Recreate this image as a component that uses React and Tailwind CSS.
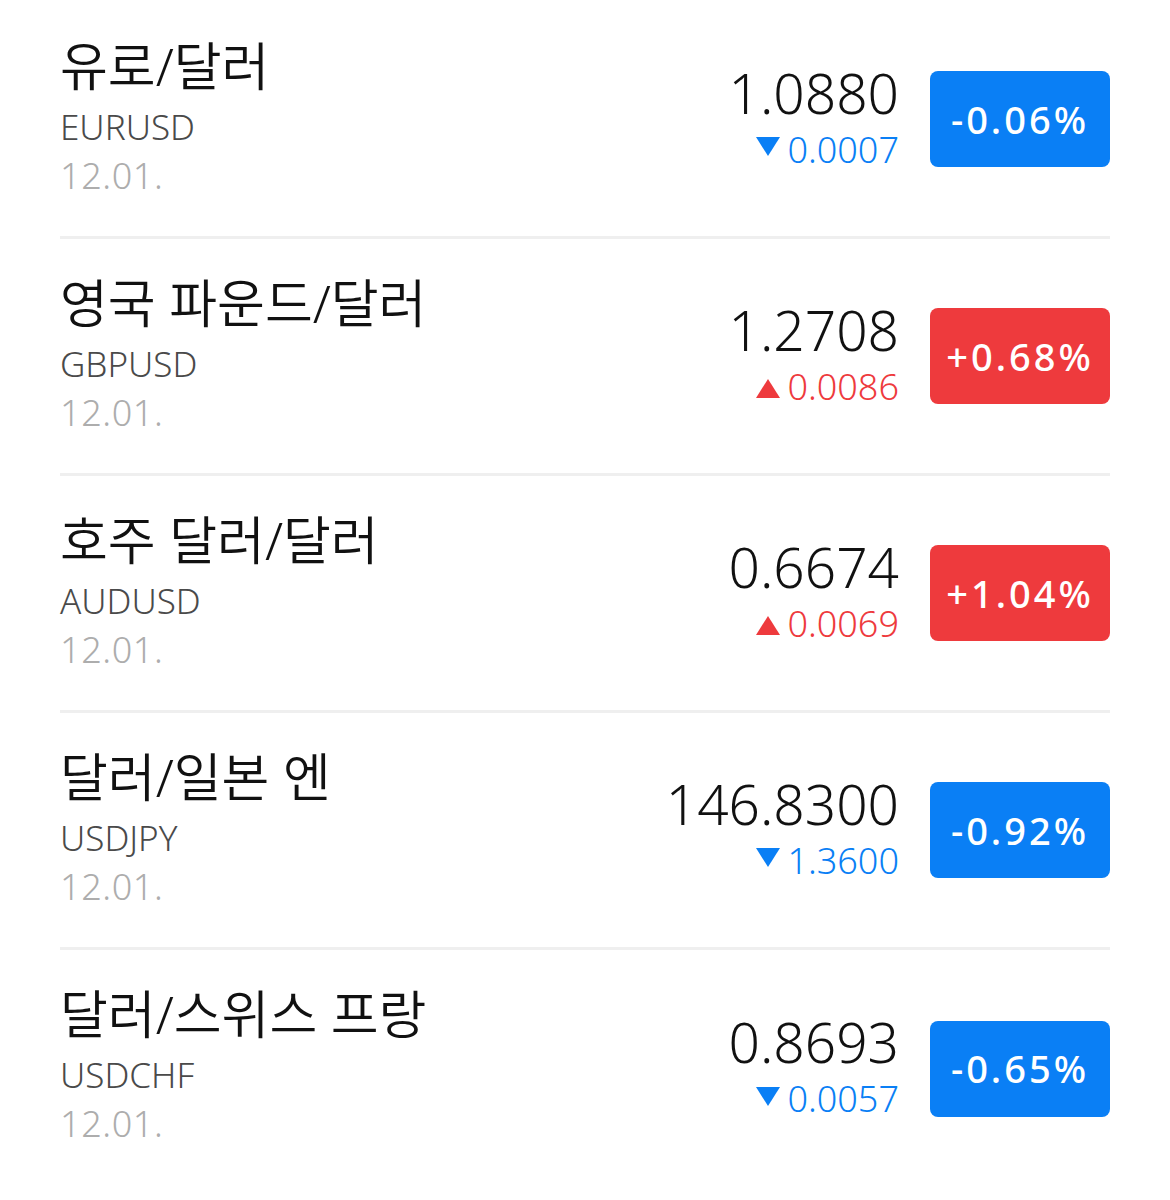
import React from "react";

const rows = [
  { name: "유로/달러", code: "EURUSD", date: "12.01.", price: "1.0880", change: "0.0007", pct: "-0.06%", up: false },
  { name: "영국 파운드/달러", code: "GBPUSD", date: "12.01.", price: "1.2708", change: "0.0086", pct: "+0.68%", up: true },
  { name: "호주 달러/달러", code: "AUDUSD", date: "12.01.", price: "0.6674", change: "0.0069", pct: "+1.04%", up: true },
  { name: "달러/일본 엔", code: "USDJPY", date: "12.01.", price: "146.8300", change: "1.3600", pct: "-0.92%", up: false },
  { name: "달러/스위스 프랑", code: "USDCHF", date: "12.01.", price: "0.8693", change: "0.0057", pct: "-0.65%", up: false },
];

function Triangle({ up }) {
  return up ? (
    <svg width="24" height="19" viewBox="0 0 24 19" className="translate-y-[2px]">
      <polygon points="12,0 24,19 0,19" fill="#ee3a3d" />
    </svg>
  ) : (
    <svg width="24" height="19" viewBox="0 0 24 19" className="-translate-y-[3px]">
      <polygon points="0,0 24,0 12,19" fill="#0a7ff5" />
    </svg>
  );
}

function Row({ r, last }) {
  return (
    <div
      className={
        "flex justify-between h-[237px] " +
        (last ? "" : "border-b-[3px] border-[#efefef]")
      }
    >
      <div className="flex flex-col pt-[33px]">
        <div className="text-[52px] leading-[62px] text-[#111111] [font-weight:350]">{r.name}</div>
        <div className="mt-[5px] text-[35px] leading-[49px] text-[#4a4a4a] [font-weight:350]">{r.code}</div>
        <div className="text-[36px] leading-[49px] tracking-[0.6px] text-[#adadad] font-light">{r.date}</div>
      </div>
      <div className="flex items-center gap-[31px]">
        <div className="flex flex-col items-end">
          <div className="text-[55px] leading-[58px] text-[#111111] [font-weight:350]">{r.price}</div>
          <div
            className={
              "mt-[3px] flex items-center gap-[7px] text-[36px] leading-[50px] font-light " +
              (r.up ? "text-[#ee3a3d]" : "text-[#0a7ff5]")
            }
          >
            <Triangle up={r.up} />
            <span>{r.change}</span>
          </div>
        </div>
        <div
          className={
            "w-[180px] h-[96px] rounded-[8px] flex items-center justify-center text-white text-[38px] font-medium tracking-[3px] " +
            (r.up ? "bg-[#ee3a3d]" : "bg-[#0a7ff5]")
          }
        >
          {r.pct}
        </div>
      </div>
    </div>
  );
}

export default function App() {
  return (
    <div
      className="w-[1170px] h-[1200px] bg-white px-[60px] pt-[2px]"
      style={{ fontFamily: '"Noto Sans", "Noto Sans CJK KR", sans-serif' }}
    >
      {rows.map((r, i) => (
        <Row key={i} r={r} last={i === rows.length - 1} />
      ))}
    </div>
  );
}
